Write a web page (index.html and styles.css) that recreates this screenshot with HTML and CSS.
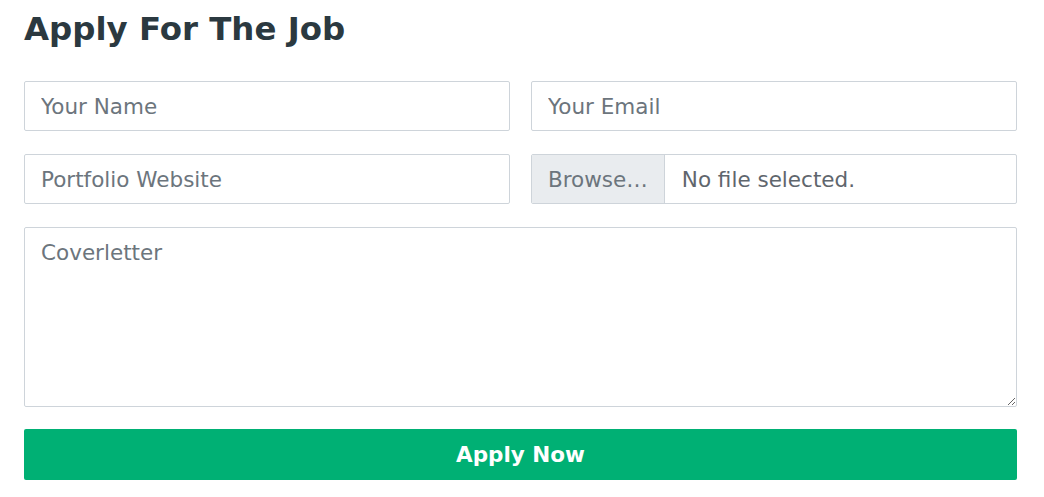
FILE: index.html
```html
<!DOCTYPE html>
<html>
<head>
<meta charset="utf-8">
<link rel="stylesheet" href="styles.css">
</head>
<body>
<div class="wrap">
  <h2 class="title">Apply For The Job</h2>
  <form class="form">
    <div class="row">
      <input class="field" type="text" placeholder="Your Name">
      <input class="field" type="email" placeholder="Your Email">
    </div>
    <div class="row">
      <input class="field" type="text" placeholder="Portfolio Website">
      <label class="file">
        <span class="file-btn">Browse…</span>
        <span class="file-name">No file selected.</span>
      </label>
    </div>
    <textarea class="field area" placeholder="Coverletter"></textarea>
    <button class="submit" type="button">Apply Now</button>
  </form>
</div>
</body>
</html>
```
FILE: styles.css
```css
* { box-sizing: border-box; }
body {
  margin: 0;
  background: #fff;
  font-family: "DejaVu Sans", sans-serif;
}
.wrap {
  width: 993px;
  margin-left: 24px;
  padding-top: 9px;
}
.title {
  margin: 0 0 32px 0;
  font-size: 32.4px;
  line-height: 40px;
  font-weight: bold;
  color: #2b3940;
}
.form {
  display: flex;
  flex-direction: column;
  gap: 23px;
}
.row {
  display: grid;
  grid-template-columns: minmax(0, 1fr) minmax(0, 1fr);
  column-gap: 21px;
}
.field {
  width: 100%;
  height: 50px;
  border: 1px solid #ced4da;
  border-radius: 2px;
  padding: 0 16px;
  font-family: "DejaVu Sans", sans-serif;
  font-size: 21.5px;
  color: #495057;
  background: #fff;
  outline: none;
}
.field::placeholder { color: #6c757d; }
.area {
  height: 180px;
  padding: 12px 16px;
  resize: vertical;
}
.file {
  height: 50px;
  display: flex;
  border: 1px solid #ced4da;
  border-radius: 2px;
  font-size: 21.5px;
  color: #495057;
  overflow: hidden;
}
.file-btn {
  display: flex;
  align-items: center;
  padding: 0 16px;
  background: #e9ecef;
  border-right: 1px solid #ced4da;
  color: #6c757d;
}
.file-name {
  display: flex;
  align-items: center;
  padding-left: 17px;
  color: #5f666d;
}
.submit {
  height: 51px;
  border: none;
  border-radius: 2px;
  background: #00b074;
  color: #fff;
  font-family: "DejaVu Sans", sans-serif;
  font-size: 21.5px;
  font-weight: bold;
  margin-top: -1px;
}
```
